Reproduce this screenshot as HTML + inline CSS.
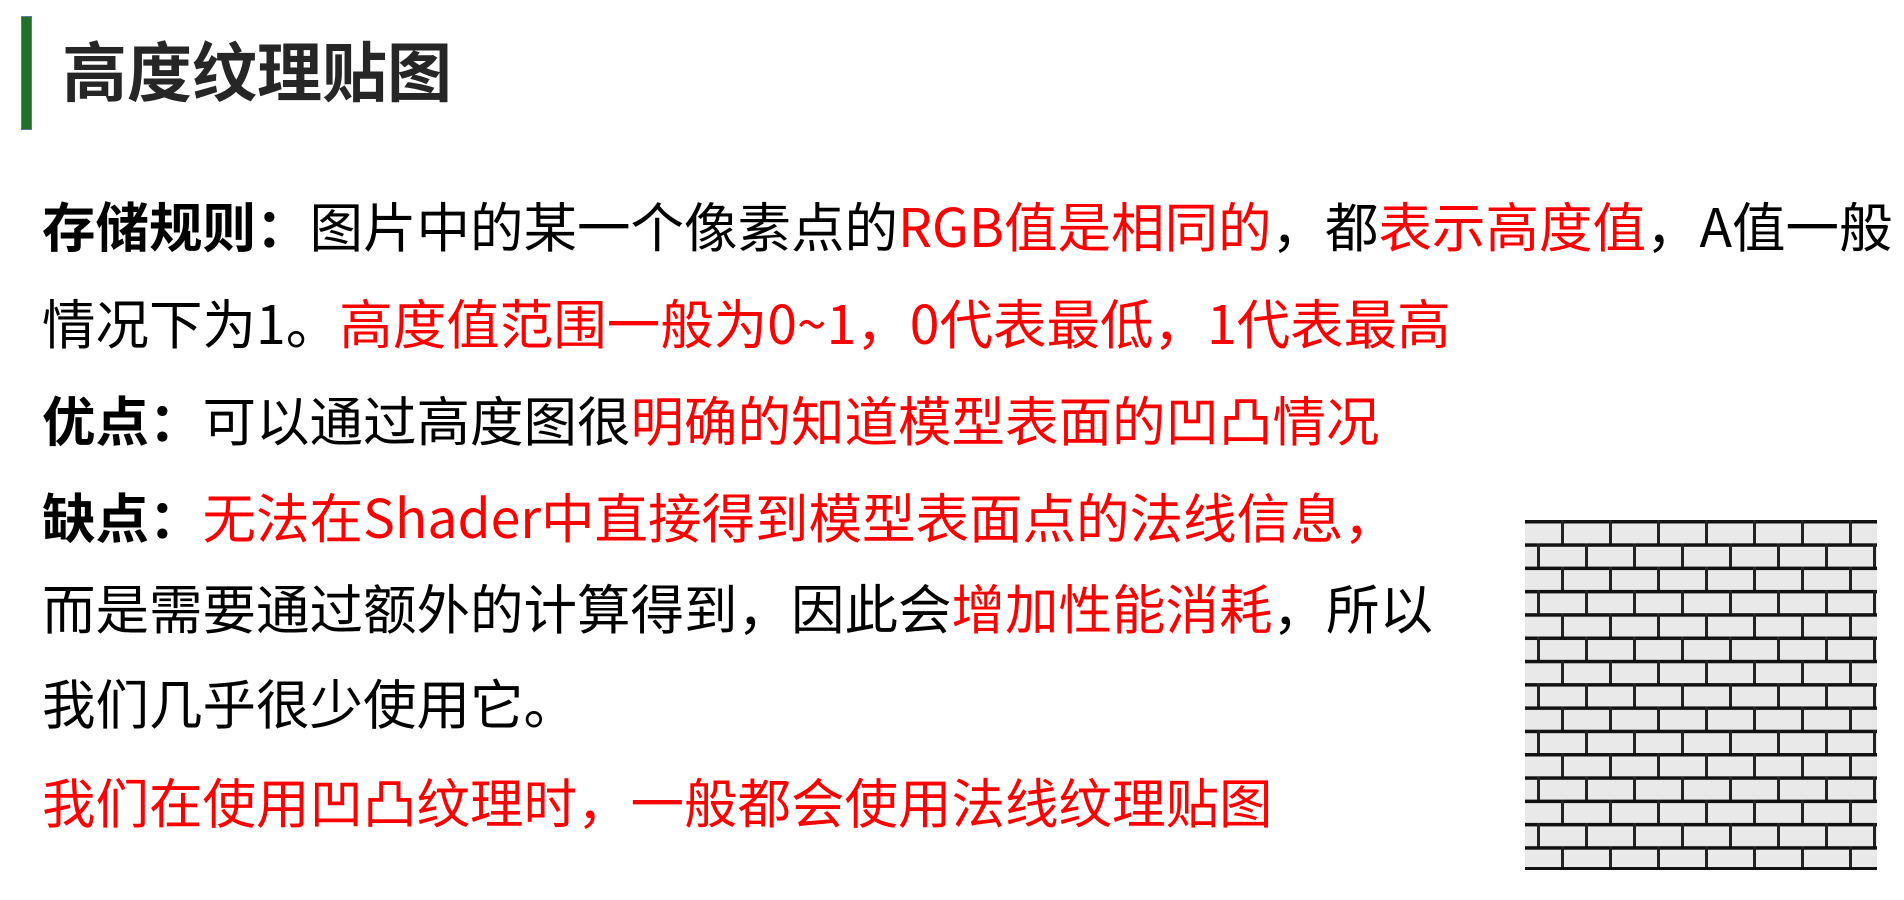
<!DOCTYPE html>
<html><head><meta charset="utf-8">
<style>
html,body{margin:0;padding:0;background:#fff;}
body{width:1904px;height:900px;position:relative;overflow:hidden;font-family:"Liberation Sans","Noto Sans CJK SC",sans-serif;color:#000;}
.bar{position:absolute;left:21px;top:16px;width:11px;height:114px;background:#23702a;border:1px solid #5a7aa0;box-sizing:border-box;}
.title{position:absolute;left:62px;top:28px;font-size:65px;font-weight:bold;line-height:80px;color:#262626;font-family:"Noto Sans CJK SC",sans-serif;}
.l{position:absolute;left:42px;font-size:53.5px;line-height:70px;white-space:nowrap;font-family:"Noto Sans CJK SC",sans-serif;}
.r{color:#ff0000;}
b{font-weight:bold;}
.img{position:absolute;left:1525px;top:520px;width:352px;height:350px;}
</style></head><body>
<div class="bar"></div>
<div class="title">高度纹理贴图</div>
<div class="l" style="top:190px"><b>存储规则：</b>图片中的某一个像素点的<span class="r">RGB值是相同的</span>，都<span class="r">表示高度值</span>，A值一般</div>
<div class="l" style="top:287px">情况下为1。<span class="r">高度值范围一般为0~1，0代表最低，1代表最高</span></div>
<div class="l" style="top:384px"><b>优点：</b>可以通过高度图很<span class="r">明确的知道模型表面的凹凸情况</span></div>
<div class="l" style="top:481px"><b>缺点：</b><span class="r">无法在Shader中直接得到模型表面点的法线信息，</span></div>
<div class="l" style="top:572px">而是需要通过额外的计算得到，因此会<span class="r">增加性能消耗</span>，所以</div>
<div class="l" style="top:667px">我们几乎很少使用它。</div>
<div class="l r" style="top:766px">我们在使用凹凸纹理时，一般都会使用法线纹理贴图</div>
<svg class="img" viewBox="0 0 352 350">
<defs>
<pattern id="b" width="96" height="46.6" patternUnits="userSpaceOnUse" x="-12">
<rect width="96" height="46.6" fill="#e9e9e9"/>
<rect y="0" width="96" height="3.5" fill="#111"/>
<rect y="23.3" width="96" height="3.5" fill="#111"/>
<rect x="0" y="0" width="3" height="23.3" fill="#222"/>
<rect x="48" y="0" width="3" height="23.3" fill="#222"/>
<rect x="24" y="23.3" width="3" height="23.3" fill="#222"/>
<rect x="72" y="23.3" width="3" height="23.3" fill="#222"/>
</pattern>
</defs>
<rect width="352" height="350" fill="url(#b)"/>
<rect y="347" width="352" height="3" fill="#111"/>
</svg>
</body></html>
